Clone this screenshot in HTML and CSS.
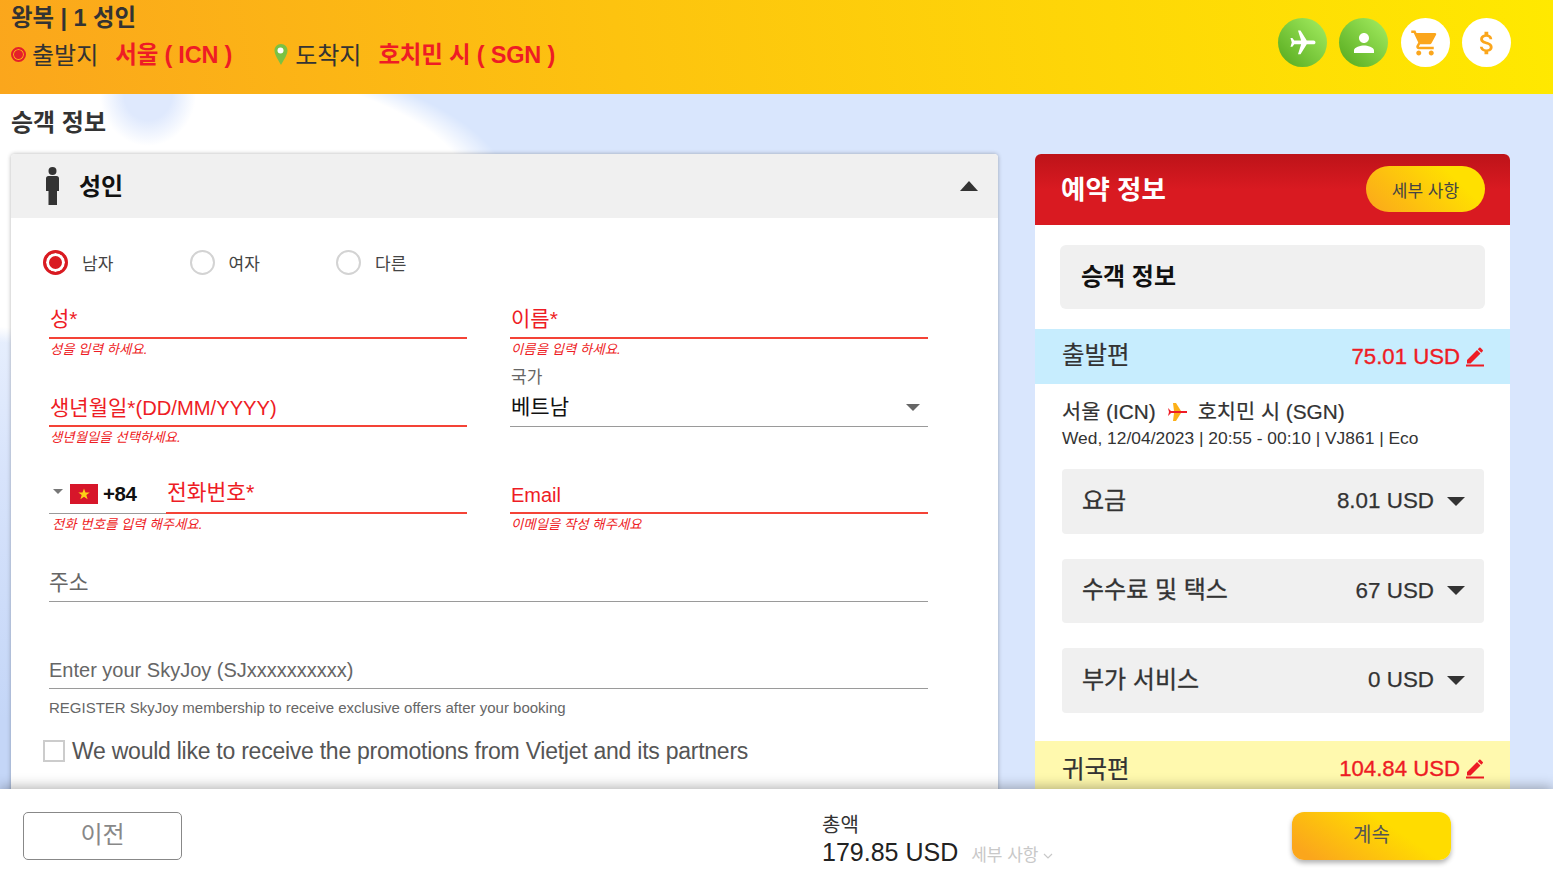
FILE: index.html
```html
<!DOCTYPE html>
<html lang="ko">
<head>
<meta charset="utf-8">
<title>승객 정보</title>
<link rel="stylesheet" href="styles.css">
</head>
<body>
<div class="page">
  <header class="topbar">
    <div class="trip">
      <div class="trip-title">왕복 | 1 성인</div>
      <div class="trip-route">
        <span class="route-dot"></span>
        <span class="route-label">출발지</span>
        <strong class="route-city">서울 ( ICN )</strong>
        <svg class="route-pin" viewBox="0 0 14 22"><path d="M7 0C3 0 .5 3 .5 6.500.5 11 5 17 7 21c2-4 6.500-10 6.500-14.500C13.500 3 11 0 7 0z" fill="#7ac143"/><circle cx="6.500" cy="6.500" r="3" fill="#fff"/></svg>
        <span class="route-label">도착지</span>
        <strong class="route-city">호치민 시 ( SGN )</strong>
      </div>
    </div>
    <nav class="steps">
      <span class="step step-on"><svg viewBox="0 0 24 24"><path d="M21 16v-2l-8-5V3.500C13 2.670 12.330 2 11.500 2S10 2.670 10 3.500V9l-8 5v2l8-2.500V19l-2 1.500V22l3.500-1 3.500 1v-1.500L13 19v-5.500l8 2.500z" transform="rotate(90 12 12)" fill="#fff"/></svg></span>
      <span class="step step-on"><svg viewBox="0 0 24 24"><path d="M12 12c2.210 0 4-1.790 4-4s-1.790-4-4-4-4 1.790-4 4 1.790 4 4 4zm0 2c-2.670 0-8 1.340-8 4v2h16v-2c0-2.660-5.330-4-8-4z" fill="#fff"/></svg></span>
      <span class="step"><svg viewBox="0 0 24 24"><path d="M7 18c-1.100 0-1.990.9-1.990 2S5.900 22 7 22s2-.9 2-2-.9-2-2-2zM1 2v2h2l3.600 7.590-1.350 2.450c-.16.280-.25.610-.25.960 0 1.100.9 2 2 2h12v-2H7.420c-.14 0-.25-.11-.25-.25l.03-.12.9-1.630h7.450c.75 0 1.410-.41 1.750-1.030l3.580-6.490A1 1 0 0 0 20 4H5.210l-.94-2H1zm16 16c-1.100 0-1.990.9-1.990 2s.89 2 1.990 2 2-.9 2-2-.9-2-2-2z" fill="#fba61c"/></svg></span>
      <span class="step"><svg viewBox="0 0 24 24"><path d="M11.800 10.900c-2.270-.59-3-1.200-3-2.150 0-1.090 1.010-1.850 2.700-1.850 1.780 0 2.440.85 2.500 2.100h2.210c-.07-1.720-1.120-3.300-3.210-3.810V3h-3v2.160c-1.940.42-3.500 1.680-3.500 3.610 0 2.310 1.910 3.460 4.700 4.130 2.500.6 3 1.480 3 2.410 0 .69-.49 1.790-2.700 1.790-2.060 0-2.870-.92-2.980-2.100h-2.200c.12 2.190 1.760 3.420 3.680 3.830V21h3v-2.150c1.950-.37 3.500-1.500 3.500-3.550 0-2.840-2.430-3.810-4.700-4.400z" fill="#fba61c"/></svg></span>
    </nav>
  </header>

  <main class="content">
    <section class="passenger">
      <h1 class="page-title">승객 정보</h1>
      <div class="card">
        <div class="card-head">
          <svg class="adult-icon" viewBox="0 0 14 38"><circle cx="7" cy="4" r="4" fill="#333"/><path d="M3 9h8a2.500 2.500 0 0 1 2.500 2.500V24h-2v14H3V24H.5V11.500A2.500 2.500 0 0 1 3 9z" fill="#333"/></svg>
          <span class="card-title">성인</span>
          <span class="caret-up"></span>
        </div>
        <form class="form">
          <div class="genders">
            <label class="gender"><span class="radio radio-on"></span>남자</label>
            <label class="gender"><span class="radio"></span>여자</label>
            <label class="gender"><span class="radio"></span>다른</label>
          </div>
          <div class="form-grid">
            <div class="field">
              <div class="field-line line-error"><span class="ph-error">성*</span></div>
              <div class="hint">성을 입력 하세요.</div>
            </div>
            <div class="field">
              <div class="field-line line-error"><span class="ph-error">이름*</span></div>
              <div class="hint">이름을 입력 하세요.</div>
            </div>
            <div class="field">
              <div class="field-line line-error line-dob"><span class="ph-error">생년월일*<span class="ph-latin">(DD/MM/YYYY)</span></span></div>
              <div class="hint">생년월일을 선택하세요.</div>
            </div>
            <div class="field">
              <div class="small-label">국가</div>
              <div class="field-line line-plain select-line"><span class="value">베트남</span><span class="caret-down"></span></div>
            </div>
            <div class="field">
              <div class="phone">
                <div class="phone-code">
                  <span class="code-caret"></span>
                  <svg class="flag" viewBox="0 0 28 20"><rect width="28" height="20" fill="#d7162a"/><path d="M14 4.500l1.500 4h4.200l-3.400 2.600 1.300 4.200L14 12.700l-3.600 2.600 1.300-4.200-3.400-2.600h4.200z" fill="#fcd116"/></svg>
                  <b>+84</b>
                </div>
                <div class="phone-num"><span class="ph-error ph-phone">전화번호*</span></div>
              </div>
              <div class="hint hint-phone">전화 번호를 입력 해주세요.</div>
            </div>
            <div class="field">
              <div class="field-line line-error email-line"><span class="ph-email">Email</span></div>
              <div class="hint">이메일을 작성 해주세요</div>
            </div>
          </div>
          <div class="field-line line-plain address"><span class="ph-grey ph-ko">주소</span></div>
          <div class="field-line line-plain skyjoy"><span class="ph-grey">Enter your SkyJoy (SJxxxxxxxxxx)</span></div>
          <p class="note">REGISTER SkyJoy membership to receive exclusive offers after your booking</p>
          <label class="promo"><span class="checkbox"></span>We would like to receive the promotions from Vietjet and its partners</label>
        </form>
      </div>
    </section>

    <aside class="summary">
      <div class="summary-head">
        <span class="summary-title">예약 정보</span>
        <span class="pill">세부 사항</span>
      </div>
      <div class="pax-box">승객 정보</div>
      <div class="leg leg-out">
        <span class="leg-label">출발편</span>
        <span class="leg-price">75.01 USD<svg class="edit" viewBox="0 0 18 20"><path d="M1 13.500V17h3.500L14.500 7 11 3.500zM16.700 4.800a1 1 0 0 0 0-1.400L14.600 1.300a1 1 0 0 0-1.400 0L11.800 2.700l3.500 3.500z" fill="#ee1c25"/><rect y="18" width="18" height="2" fill="#ee1c25"/></svg></span>
      </div>
      <div class="flight">
        <div class="flight-route"><span>서울 (ICN)</span>
          <svg class="mini-plane" viewBox="0 0 20 20"><path d="M6 1h3l5 8H7zM6 19h3l5-8H7z" fill="#fcb017"/><path d="M1 6l3 3h16v2H4l-3 3 1-4z" fill="#ee1c25"/></svg>
          <span>호치민 시 (SGN)</span></div>
        <div class="flight-meta">Wed, 12/04/2023 | 20:55 - 00:10 | VJ861 | Eco</div>
      </div>
      <div class="fare"><span class="fare-label">요금</span><span class="fare-amount">8.01 USD<i class="fare-caret"></i></span></div>
      <div class="fare"><span class="fare-label">수수료 및 택스</span><span class="fare-amount">67 USD<i class="fare-caret"></i></span></div>
      <div class="fare"><span class="fare-label">부가 서비스</span><span class="fare-amount">0 USD<i class="fare-caret"></i></span></div>
      <div class="leg leg-back">
        <span class="leg-label">귀국편</span>
        <span class="leg-price">104.84 USD<svg class="edit" viewBox="0 0 18 20"><path d="M1 13.500V17h3.500L14.500 7 11 3.500zM16.700 4.800a1 1 0 0 0 0-1.400L14.600 1.300a1 1 0 0 0-1.400 0L11.800 2.700l3.500 3.500z" fill="#ee1c25"/><rect y="18" width="18" height="2" fill="#ee1c25"/></svg></span>
      </div>
    </aside>
  </main>

  <footer class="footer">
    <button class="btn-back" type="button">이전</button>
    <div class="total">
      <div class="total-label">총액</div>
      <div class="total-row"><span class="total-amount">179.85 USD</span><span class="total-more">세부 사항 <svg viewBox="0 0 10 6"><path d="M1 1l4 4 4-4" fill="none" stroke="#c8c8c8" stroke-width="1.200"/></svg></span></div>
    </div>
    <button class="btn-next" type="button">계속</button>
  </footer>
</div>
</body>
</html>
```

FILE: styles.css
```css
* { box-sizing: border-box; }
html, body { margin: 0; height: 100%; }
body {
  font-family: "Liberation Sans", "Noto Sans CJK KR", sans-serif;
  color: #333;
  overflow: hidden;
}
.page { height: 884px; display: flex; flex-direction: column; }

/* top bar */
.topbar {
  height: 94px;
  flex: none;
  display: flex;
  justify-content: space-between;
  background: linear-gradient(80deg, #fba61c 0%, #fdc30f 40%, #ffe900 100%);
  padding: 0 42px 0 11px;
}
.trip-title { font-size: 23.400px; font-weight: 700; line-height: 34px; color: #333; padding-top: 1px; height: 35px; }
.trip-route { display: flex; align-items: center; height: 36px; font-size: 24px; }
.route-dot {
  width: 15px; height: 15px; border-radius: 50%;
  background: #e5202a; border: 2px solid #e5202a; box-shadow: inset 0 0 0 1px #fbb016;
  margin-right: 6px;
  margin-top: 3px;
}
.route-label { color: #333; font-weight: 400; }
.route-city { color: #ee1c25; font-size: 23.500px; font-weight: 700; margin-left: 17px; letter-spacing: -.2px; }
.route-pin { width: 14px; height: 22px; margin: 4px 7px 0 42px; }
.steps { display: flex; gap: 12.300px; padding-top: 18px; }
.step {
  width: 49px; height: 49px; border-radius: 50%;
  background: #fff;
  display: flex; align-items: center; justify-content: center;
}
.step svg { width: 30px; height: 30px; }
.step-on { background: linear-gradient(45deg, #54a81c, #a6ef62); }

/* content */
.content {
  flex: 1;
  min-height: 0;
  overflow: hidden;
  display: flex;
  align-items: flex-start;
  gap: 37px;
  padding: 0 43px 0 11px;
  background:
    radial-gradient(ellipse 48px 52px at 148px 0, #dfe9fd 50%, rgba(223,233,253,0) 100%),
    radial-gradient(ellipse 411px 153px at 100px 100px, #fff 90%, rgba(255,255,255,0) 100%),
    linear-gradient(180deg, #fff 20%, #e6eefd 35%, #d7e3fb 55%, #c4d6f7 90%) 0 0 / 11px 100% no-repeat,
    #d9e6fd;
}
.passenger { width: 987px; flex: none; }
.page-title { margin: 0; height: 60px; padding-top: 11px; font-size: 24px; font-weight: 700; line-height: 36px; color: #333; }
.card {
  background: #fff;
  border-radius: 4px 4px 0 0;
  box-shadow: 0 0 4px rgba(0,0,0,.3);
  height: 660px;
}
.card-head {
  height: 64px;
  background: #f0f0f0;
  border-radius: 4px 4px 0 0;
  display: flex;
  align-items: center;
  padding: 0 20px 0 34px;
}
.adult-icon { width: 15px; height: 38px; margin-top: -1px; }
.card-title { font-size: 24px; font-weight: 700; color: #111; margin-left: 19px; flex: 1; padding-bottom: 4px; }
.caret-up { width: 0; height: 0; border: 9px solid transparent; border-top: 0; border-bottom: 10px solid #333; }

.form { padding: 0 70px 0 38px; }
.genders { display: flex; padding-top: 30px; height: 89px; margin-left: -6px; }
.gender { width: 146.500px; display: flex; align-items: center; height: 28px; font-size: 17px; color: #444; }
.radio { width: 25px; height: 25px; border-radius: 50%; border: 2px solid #d3d3d3; margin-right: 14px; flex: none; }
.radio-on { border: 3px solid #d91a21; background: #d91a21; box-shadow: inset 0 0 0 3px #fff; }

.form-grid { display: grid; grid-template-columns: 418px 418px; column-gap: 43px; }
.field { height: 88px; }
.field-line { height: 32px; display: flex; align-items: flex-end; padding-bottom: 3px; }
.line-error { border-bottom: 2px solid #f44336; }
.line-plain { border-bottom: 1px solid #9a9a9a; }
.line-dob { padding-bottom: 2px; }
.ph-error { color: #ee1c25; font-size: 21px; line-height: 30px; padding-left: 1px; }
.ph-latin { font-size: 20.200px; }
.ph-phone { font-size: 21.500px; }
.ph-email { color: #ee1c25; font-size: 20px; line-height: 28px; padding-left: 1px; }
.ph-grey { color: #666; font-size: 20px; line-height: 30px; }
.ph-ko { font-size: 21.500px; }
.hint { color: #ee1c25; font-size: 13.400px; font-style: italic; line-height: 18px; padding-left: 1px; margin-top: 2px; }
.small-label { color: #666; font-size: 17px; line-height: 20px; margin-top: -27px; padding-left: 1px; }
.select-line { justify-content: space-between; height: 39px; padding: 0 8px 5px 1px; }
.value { font-size: 21px; color: #111; line-height: 28px; }
.caret-down { width: 0; height: 0; border: 7px solid transparent; border-bottom: 0; border-top: 7px solid #666; margin-bottom: 10px; }

.phone { display: flex; height: 36px; margin-top: -5px; }
.phone-code { width: 117px; flex: none; border-bottom: 1px solid #9a9a9a; display: flex; align-items: center; padding: 0 0 4px 4px; font-size: 20.500px; color: #111; }
.phone-code b { margin-left: 5px; letter-spacing: -.4px; }
.code-caret { width: 0; height: 0; border: 5px solid transparent; border-bottom: 0; border-top: 5px solid #777; margin-right: 7px; margin-top: -4px; }
.flag { width: 28px; height: 20px; }
.phone-num { flex: 1; border-bottom: 2px solid #f44336; display: flex; align-items: flex-end; padding-bottom: 4px; }
.hint-phone { padding-left: 3px; }
.email-line { margin-top: -1px; }

.address { margin-top: -4px; height: 35px; width: 879px; }
.skyjoy { margin-top: 52px; height: 35px; width: 879px; }
.note { margin: 9px 0 0; font-size: 15px; line-height: 20px; color: #666; }
.promo { display: flex; align-items: center; margin: 16px 0 0 -6px; font-size: 23px; line-height: 34px; color: #555; letter-spacing: -.25px; }
.checkbox { width: 22px; height: 22px; border: 2px solid #ccc; margin-right: 7px; flex: none; }

/* summary */
.summary { width: 475px; flex: none; margin-top: 60px; background: #fff; border-radius: 6px 6px 0 0; height: 660px; }
.summary-head {
  height: 71px;
  background: linear-gradient(180deg, #bd1319 0%, #d91a21 50%, #d91a21 100%);
  border-radius: 6px 6px 0 0;
  display: flex;
  align-items: center;
  justify-content: space-between;
  padding: 0 25px 1px 26px;
}
.summary-title { color: #fff; font-size: 26.500px; font-weight: 700; padding-bottom: 3px; }
.pill {
  width: 119px; height: 46px; border-radius: 23px;
  background: linear-gradient(45deg, #fba61c, #ffe000 75%);
  font-size: 17px; color: #444;
  display: flex; align-items: center; justify-content: center;
}
.pax-box {
  margin: 20px 25px 20px;
  height: 64px;
  background: #f0f0f0;
  border-radius: 6px;
  padding-left: 21px;
  font-size: 24px; font-weight: 700; color: #111;
  line-height: 64px;
}
.leg { display: flex; justify-content: space-between; align-items: center; padding: 0 26px 0 27px; color: #333; height: 55px; }
.leg-out { background: #c7edfe; }
.leg-back { background: #fff9ae; margin-top: 28.500px; }
.leg-label { font-size: 24.500px; padding-bottom: 6px; -webkit-text-stroke: .2px #333; }
.leg-back .leg-label { padding-bottom: 2px; }
.leg-price { color: #ee1c25; font-size: 22.200px; font-weight: 400; display: flex; align-items: center; gap: 6px; -webkit-text-stroke: .35px #ee1c25; }
.edit { width: 18px; height: 21px; }
.flight { padding: 13px 26px 0 27px; height: 85px; color: #333; }
.flight-route { font-size: 20.800px; line-height: 30px; display: flex; align-items: center; gap: 11px; white-space: nowrap; -webkit-text-stroke: .2px #333; }
.mini-plane { width: 20px; height: 20px; }
.flight-meta { font-size: 17.400px; line-height: 20px; margin-top: 1px; }
.fare {
  margin: 0 26px 25px 27px;
  height: 64.500px;
  background: #f0f0f0;
  border-radius: 4px;
  padding: 0 19px 0 20px;
  display: flex; justify-content: space-between; align-items: center;
  font-size: 24px; color: #333;
}
.fare-label { padding-bottom: 6px; -webkit-text-stroke: .35px #333; }
.fare-amount { font-size: 22.400px; display: flex; align-items: center; -webkit-text-stroke: .25px #333; }
.fare-caret { width: 0; height: 0; border: 9px solid transparent; border-bottom: 0; border-top: 9px solid #333; margin-left: 13px; }

/* footer */
.footer {
  height: 95px;
  flex: none;
  background: #fff;
  box-shadow: 0 -2px 12px rgba(0,0,0,.3);
  position: relative;
  display: flex;
  align-items: flex-start;
  padding: 23px 102px 0 23px;
}
.btn-back {
  width: 159px; height: 48px;
  border: 1px solid #888; border-radius: 5px;
  background: #fff;
  padding: 0 0 8px;
  font: 400 24px "Liberation Sans", "Noto Sans CJK KR", sans-serif;
  color: #888;
}
.total { margin-left: 640px; flex: 1; margin-top: -1px; }
.total-label { font-size: 20px; line-height: 28px; color: #333; }
.total-row { display: flex; align-items: baseline; gap: 13px; margin-top: -2px; }
.total-amount { font-size: 25px; line-height: 30px; color: #222; }
.total-more { font-size: 17px; color: #c8c8c8; }
.total-more svg { width: 10px; height: 6px; vertical-align: 2px; }
.btn-next {
  width: 159px; height: 48px;
  border: 0; border-radius: 12px;
  background: linear-gradient(35deg, #fba61c 10%, #ffdc00 65%);
  box-shadow: 0 3px 5px rgba(0,0,0,.3);
  padding: 0 0 6px;
  font: 400 20px "Liberation Sans", "Noto Sans CJK KR", sans-serif;
  color: #555;
}
```
